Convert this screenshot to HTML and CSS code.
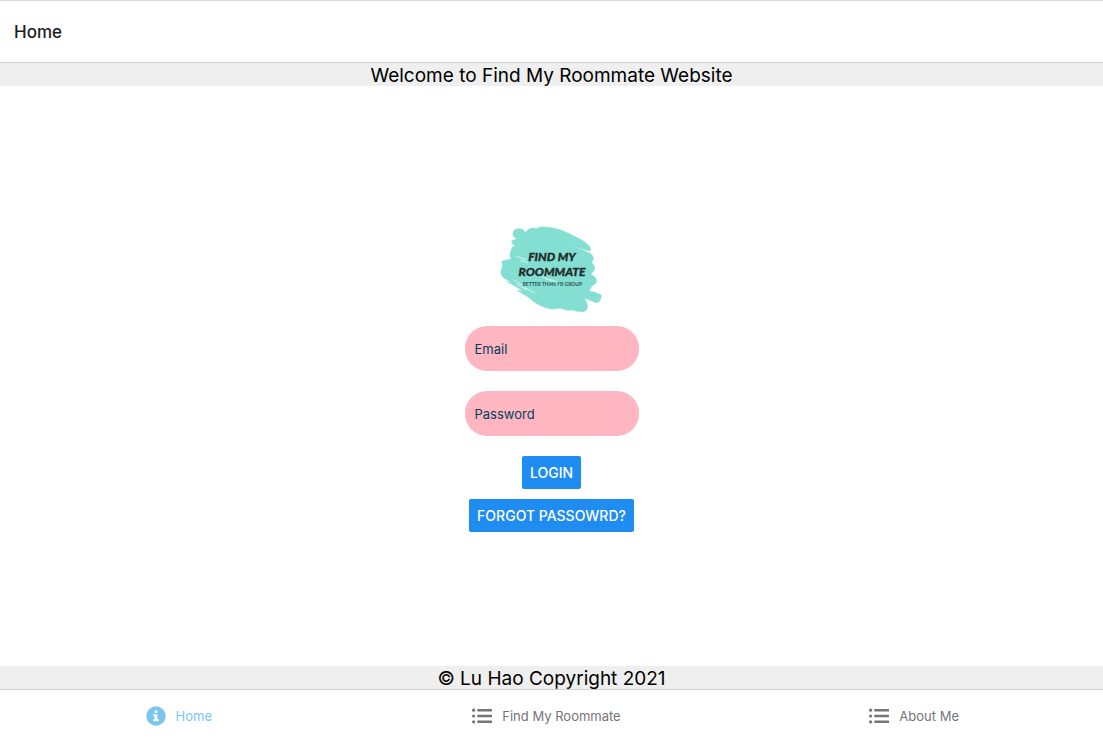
FILE: index.html
```html
<!DOCTYPE html>
<html lang="en">
<head>
<meta charset="utf-8">
<title>Home</title>
<link rel="stylesheet" href="styles.css">
</head>
<body>
<header class="header"><h1 class="title">Home</h1></header>
<p class="banner">Welcome to Find My Roommate Website</p>
<main class="main">
  <svg class="logo" viewBox="0 0 369 315" role="img" aria-label="Find My Roommate">
    <path class="paint" d="M72 45Q82 37 98 43L106 52Q112 42 127 38L140 41Q146 33 172 36Q196 38 216 46L245 59L270 72Q290 83 298 94Q306 106 301 108Q288 107 269 100L238 88L262 98L291 110Q308 116 311 130L306 143Q318 154 313 165L303 178Q319 186 320 197Q320 208 306 212L298 228Q306 230 316 232L335 241Q335 250 326 262Q316 265 300 256L282 250Q294 265 293 276Q291 289 280 290Q262 291 247 286L231 286L212 280L187 283Q167 280 148 271L132 261L117 248L103 239L80 226L98 228L70 211L48 198L66 202L42 190Q31 180 32 169L38 153Q33 142 37 138Q46 134 64 132Q58 125 60 117L66 97L76 92Q64 88 65 77L79 71Q68 64 68 56Z"/>
    <path class="scratch" d="M80 124L109 135M93 137L112 143M180 192L205 204M159 186L186 199M72 196L98 210M80 207L110 224M104 218L134 234"/>
    <text class="brush" x="186" y="138">FIND MY</text>
    <text class="brush" x="186" y="183">ROOMMATE</text>
    <text class="tagline" x="187" y="214">BETTER THAN FB GROUP</text>
  </svg>
  <form class="form">
    <input class="field" type="email" placeholder="Email" aria-label="Email">
    <input class="field" type="password" placeholder="Password" aria-label="Password">
    <button class="button" type="button">LOGIN</button>
    <button class="button" type="button">FORGOT PASSOWRD?</button>
  </form>
</main>
<footer class="banner">© Lu Hao Copyright 2021</footer>
<nav class="tabs">
  <a class="tab active" href="#home">
    <svg class="icon" viewBox="0 0 20 20" aria-hidden="true"><circle cx="10" cy="10" r="9.7" fill="currentColor"/><circle cx="10" cy="5.6" r="1.6" fill="#fff"/><path d="M7.4 8.3H11.4V13.3H12.8V15.3H7.2V13.3H8.6V10.3H7.4Z" fill="#fff"/></svg>
    <span>Home</span>
  </a>
  <a class="tab" href="#find">
    <svg class="icon" viewBox="0 0 20 20" aria-hidden="true" fill="currentColor"><circle cx="1.6" cy="4.2" r="1.6"/><circle cx="1.6" cy="10" r="1.6"/><circle cx="1.6" cy="15.8" r="1.6"/><rect x="5.3" y="3" width="14.7" height="2.5" rx=".5"/><rect x="5.3" y="8.8" width="14.7" height="2.5" rx=".5"/><rect x="5.3" y="14.6" width="14.7" height="2.5" rx=".5"/></svg>
    <span>Find My Roommate</span>
  </a>
  <a class="tab" href="#about">
    <svg class="icon" viewBox="0 0 20 20" aria-hidden="true" fill="currentColor"><circle cx="1.6" cy="4.2" r="1.6"/><circle cx="1.6" cy="10" r="1.6"/><circle cx="1.6" cy="15.8" r="1.6"/><rect x="5.3" y="3" width="14.7" height="2.5" rx=".5"/><rect x="5.3" y="8.8" width="14.7" height="2.5" rx=".5"/><rect x="5.3" y="14.6" width="14.7" height="2.5" rx=".5"/></svg>
    <span>About Me</span>
  </a>
</nav>
</body>
</html>
```
FILE: styles.css
```css
* { box-sizing: border-box; }
body {
  margin: 0;
  min-height: 100vh;
  display: flex;
  flex-direction: column;
  background: #fff;
  color: #000;
  font-family: Inter, "Liberation Sans", sans-serif;
}
.header {
  display: flex;
  align-items: center;
  height: 63px;
  padding: 0 14px;
  border-top: 1px solid #d8d8d8;
  border-bottom: 1px solid #d0d0d0;
}
.title { margin: 0; font-size: 17px; font-weight: 500; color: #1c1c1e; }
.banner {
  margin: 0;
  padding-top: 2px;
  background: #efefef;
  font-size: 19px;
  line-height: 21px;
  text-align: center;
}
.main {
  flex: 1;
  display: flex;
  flex-direction: column;
  align-items: center;
  justify-content: center;
}
.logo { width: 123px; height: 105px; margin-bottom: 6px; }
.paint { fill: #84dfd3; stroke: #84dfd3; stroke-width: 1; stroke-linejoin: round; }
.scratch { fill: none; stroke: #d8f5f1; stroke-width: 3; stroke-linecap: round; }
.brush {
  fill: #222b2a;
  stroke: #222b2a;
  stroke-width: 1;
  font: italic 900 36px Lato, sans-serif;
  text-anchor: middle;
}
.tagline { fill: #2d5450; font: 700 15px Lato, sans-serif; text-anchor: middle; }
.form { display: flex; flex-direction: column; align-items: center; padding-bottom: 5px; }
.field {
  width: 174px;
  height: 45px;
  margin-bottom: 20px;
  padding: 0 10px;
  border: 0;
  border-radius: 22px;
  background: #ffb6c1;
  color: #003f5c;
  font: 13px Inter, sans-serif;
}
.field::placeholder { color: #003f5c; opacity: 1; }
.button {
  height: 33px;
  padding: 0 8px;
  border: 0;
  border-radius: 2px;
  background: #1f8cf2;
  color: #fff;
  font: 500 14px Inter, sans-serif;
}
.button + .button { margin-top: 10px; }
.tabs {
  display: grid;
  grid-template-columns: repeat(3, 1fr);
  height: 50px;
  border-top: 1px solid #d0d0d0;
}
.tab {
  display: flex;
  align-items: center;
  justify-content: center;
  gap: 10px;
  padding: 3px 10px 0 0;
  color: #757577;
  font-size: 13px;
  text-decoration: none;
}
.active { color: #7ac6ee; }
.icon { width: 20px; height: 20px; margin-bottom: 1px; }
```
